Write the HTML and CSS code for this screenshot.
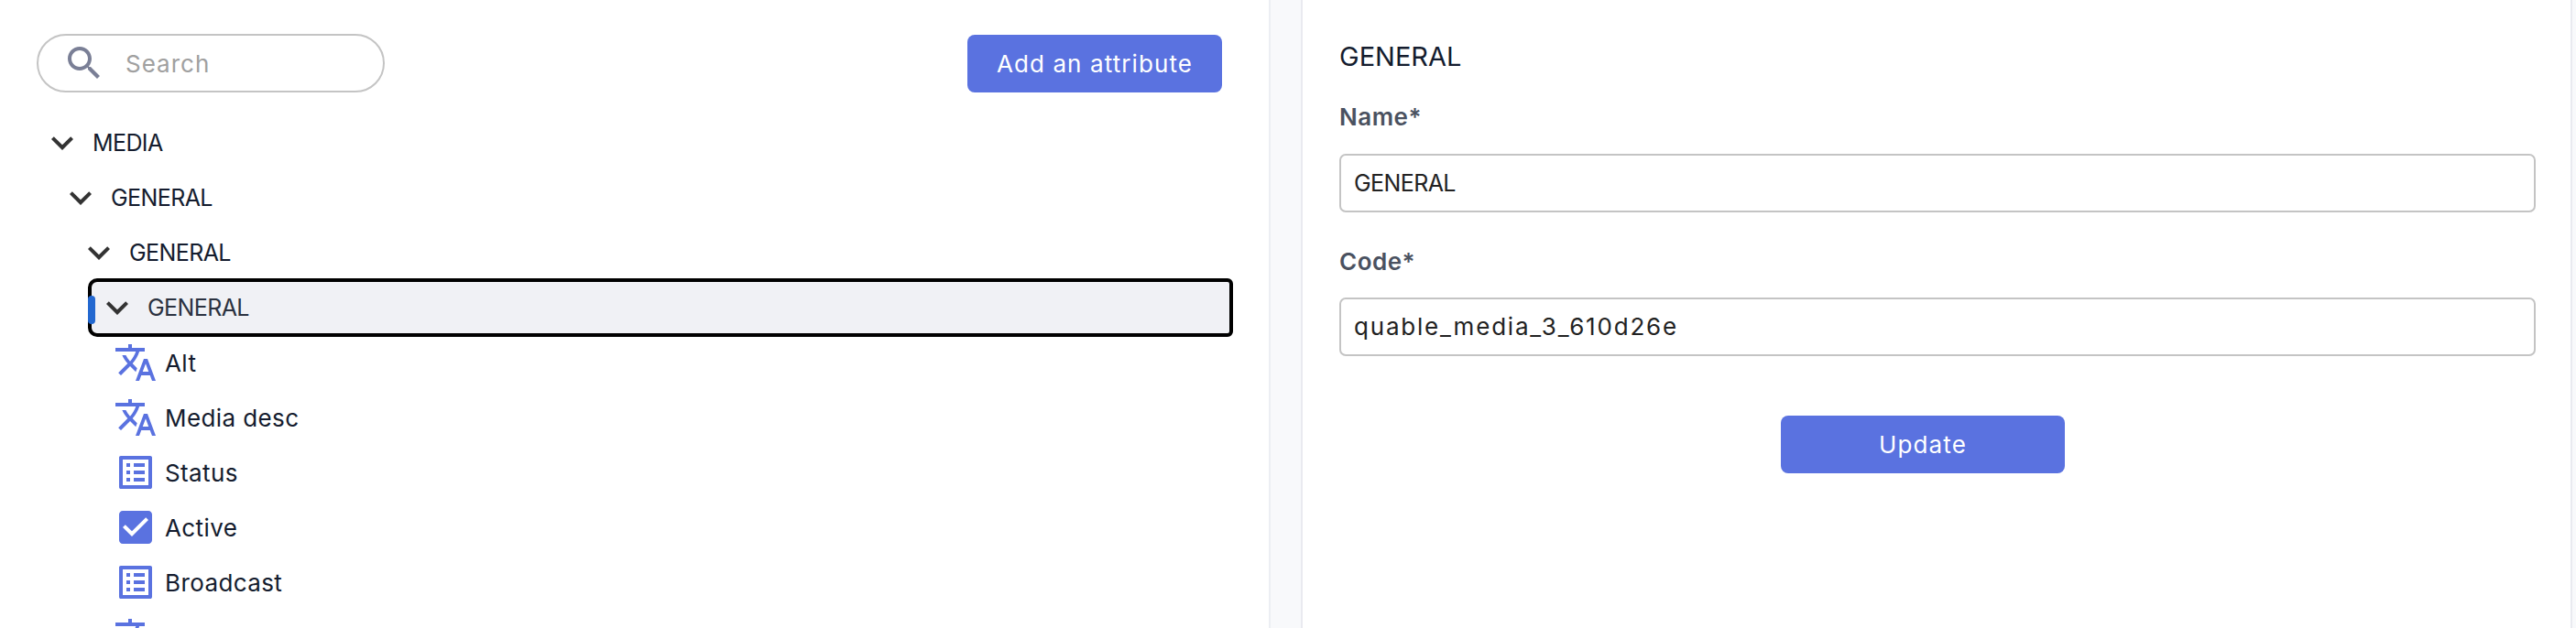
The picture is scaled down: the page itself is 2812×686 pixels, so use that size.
FILE: index.html
```html
<!DOCTYPE html>
<html lang="en">
<head>
<meta charset="utf-8">
<title>Attributes</title>
<link rel="stylesheet" href="styles.css">
</head>
<body>
<div class="layout">
  <section class="tree-panel">
    <div class="toolbar">
      <label class="search">
        <svg class="search-icon" viewBox="0 0 24 24"><path d="M15.5 14h-.79l-.28-.27C15.41 12.59 16 11.11 16 9.5 16 5.91 13.09 3 9.5 3S3 5.91 3 9.5 5.91 16 9.5 16c1.61 0 3.09-.59 4.23-1.57l.27.28v.79l5 4.99L20.49 19l-4.99-5zm-6 0C7.01 14 5 11.99 5 9.5S7.01 5 9.5 5 14 7.01 14 9.5 11.99 14 9.5 14z"/></svg>
        <span class="search-text">Search</span>
      </label>
      <button class="btn btn-add">Add an attribute</button>
    </div>
    <ul class="tree">
      <li class="row lvl-0"><svg class="chev" viewBox="0 0 24 24"><path d="M16.59 8.59L12 13.17 7.41 8.59 6 10l6 6 6-6z"/></svg><span>MEDIA</span></li>
      <li class="row lvl-1"><svg class="chev" viewBox="0 0 24 24"><path d="M16.59 8.59L12 13.17 7.41 8.59 6 10l6 6 6-6z"/></svg><span>GENERAL</span></li>
      <li class="row lvl-2"><svg class="chev" viewBox="0 0 24 24"><path d="M16.59 8.59L12 13.17 7.41 8.59 6 10l6 6 6-6z"/></svg><span>GENERAL</span></li>
      <li class="row lvl-3 selected"><svg class="chev" viewBox="0 0 24 24"><path d="M16.59 8.59L12 13.17 7.41 8.59 6 10l6 6 6-6z"/></svg><span>GENERAL</span></li>
      <li class="row leaf"><svg class="ico" viewBox="0 0 24 24"><path d="M12.87 15.07l-2.54-2.51.03-.03c1.74-1.94 2.98-4.17 3.71-6.53H17V4h-7V2H8v2H1v2h11.17C11.5 7.92 10.44 9.75 9 11.35 8.07 10.32 7.3 9.19 6.69 8h-2c.73 1.63 1.73 3.17 2.98 4.56l-5.09 5.02L4 19l5-5 3.11 3.11.76-2.04zM18.5 10h-2L12 22h2l1.12-3h4.75L21 22h2l-4.5-12zm-2.62 7l1.62-4.33L19.12 17h-3.24z"/></svg><span>Alt</span></li>
      <li class="row leaf"><svg class="ico" viewBox="0 0 24 24"><path d="M12.87 15.07l-2.54-2.51.03-.03c1.74-1.94 2.98-4.17 3.71-6.53H17V4h-7V2H8v2H1v2h11.17C11.5 7.92 10.44 9.75 9 11.35 8.07 10.32 7.3 9.19 6.69 8h-2c.73 1.63 1.73 3.17 2.98 4.56l-5.09 5.02L4 19l5-5 3.11 3.11.76-2.04zM18.5 10h-2L12 22h2l1.12-3h4.75L21 22h2l-4.5-12zm-2.62 7l1.62-4.33L19.12 17h-3.24z"/></svg><span>Media desc</span></li>
      <li class="row leaf"><svg class="ico" viewBox="0 0 24 24"><path d="M19 5v14H5V5h14m1.1-2H3.9c-.5 0-.9.4-.9.9v16.2c0 .4.4.9.9.9h16.2c.4 0 .9-.5.9-.9V3.9c0-.5-.5-.9-.9-.9zM11 7h6v2h-6V7zm0 4h6v2h-6v-2zm0 4h6v2h-6zM7 7h2v2H7zm0 4h2v2H7zm0 4h2v2H7z"/></svg><span>Status</span></li>
      <li class="row leaf"><svg class="ico" viewBox="0 0 24 24"><path d="M19 3H5c-1.11 0-2 .9-2 2v14c0 1.1.89 2 2 2h14c1.11 0 2-.9 2-2V5c0-1.1-.89-2-2-2zm-9 14l-5-5 1.41-1.41L10 14.17l7.59-7.59L19 8l-9 9z"/></svg><span>Active</span></li>
      <li class="row leaf"><svg class="ico" viewBox="0 0 24 24"><path d="M19 5v14H5V5h14m1.1-2H3.9c-.5 0-.9.4-.9.9v16.2c0 .4.4.9.9.9h16.2c.4 0 .9-.5.9-.9V3.9c0-.5-.5-.9-.9-.9zM11 7h6v2h-6V7zm0 4h6v2h-6v-2zm0 4h6v2h-6zM7 7h2v2H7zm0 4h2v2H7zm0 4h2v2H7z"/></svg><span>Broadcast</span></li>
      <li class="row leaf"><svg class="ico" viewBox="0 0 24 24"><path d="M12.87 15.07l-2.54-2.51.03-.03c1.74-1.94 2.98-4.17 3.71-6.53H17V4h-7V2H8v2H1v2h11.17C11.5 7.92 10.44 9.75 9 11.35 8.07 10.32 7.3 9.19 6.69 8h-2c.73 1.63 1.73 3.17 2.98 4.56l-5.09 5.02L4 19l5-5 3.11 3.11.76-2.04zM18.5 10h-2L12 22h2l1.12-3h4.75L21 22h2l-4.5-12zm-2.62 7l1.62-4.33L19.12 17h-3.24z"/></svg><span>Featured</span></li>
    </ul>
  </section>
  <section class="form-panel">
    <h2 class="form-title">GENERAL</h2>
    <label class="field-label">Name*</label>
    <div class="input">GENERAL</div>
    <label class="field-label second">Code*</label>
    <div class="input code-value">quable_media_3_610d26e</div>
    <div class="actions"><button class="btn btn-update">Update</button></div>
  </section>
</div>
</body>
</html>
```
FILE: styles.css
```css
* { box-sizing: border-box; }
html, body { margin: 0; height: 100%; overflow: hidden; background: #f8f9fb; }
body { font-family: Inter, "Noto Sans", sans-serif; font-size: 25px; letter-spacing: -0.6px; color: #141c2e; }
.layout { display: flex; height: 686px; }
.tree-panel { width: 1387px; flex: none; background: #fff; border-right: 2px solid #eceef3; padding: 37px 51px 0 40px; overflow: hidden; }
.toolbar { display: flex; justify-content: space-between; align-items: center; height: 64px; }
.search { display: flex; align-items: center; width: 380px; height: 64px; border: 2px solid #c4c4c4; border-radius: 32px; padding-left: 26px; }
.search-icon { width: 48px; height: 48px; fill: #7a7f96; flex: none; }
.search-text { margin-left: 21px; color: #a0a0a0; font-size: 26px; letter-spacing: 1px; }
.btn { border: 0; border-radius: 8px; background: #5a72e0; color: #fff; font: inherit; font-size: 26px; letter-spacing: 1.1px; height: 63px; padding: 0; }
.btn-add { width: 278px; }
.tree { list-style: none; margin: 25px 0 0; padding: 0; }
.row { display: flex; align-items: center; height: 60px; }
.chev { width: 48px; height: 48px; fill: #333; flex: none; margin-right: 9px; }
.lvl-0 { margin-left: 4px; }
.lvl-1 { margin-left: 24px; }
.lvl-2 { margin-left: 44px; }
.lvl-3 { margin-left: 56px; }
.selected { position: relative; height: 64px; margin-top: -2px; margin-bottom: -2px; width: 1250px; padding-left: 4px; background: #f0f1f5; border: 4px solid #000; border-radius: 10px 6px 6px 10px; color: #2b3240; }
.selected::before { content: ""; position: absolute; left: -4px; top: 15px; width: 8px; height: 31px; background: #2368d0; border-radius: 4px; }
.ico { width: 48px; height: 48px; fill: #5a72e0; flex: none; margin-right: 8px; }
.leaf { margin-left: 84px; font-size: 26px; letter-spacing: 0.4px; }
.form-panel { width: 1388px; margin-left: 33px; flex: none; background: #fff; border-left: 2px solid #e9eaf0; border-right: 2px solid #e9eaf0; padding: 0 38px 0 40px; }
.form-title { font-size: 29px; font-weight: 400; letter-spacing: 0; margin: 44px 0 0; line-height: 36px; }
.field-label { display: block; font-size: 26px; font-weight: 600; color: #4a5160; line-height: 30px; margin-top: 33px; letter-spacing: 0.5px; }
.field-label.second { margin-top: 39px; }
.input { height: 64px; margin-top: 25px; border: 2px solid #c4c4c4; border-radius: 7px; padding: 0 14px; line-height: 60px; color: #222; }
.field-label.second + .input { margin-top: 24px; }
.code-value { font-size: 26px; letter-spacing: 1.8px; }
.actions { margin-top: 65px; padding-right: 32px; display: flex; justify-content: center; }
.btn-update { width: 310px; }
```
